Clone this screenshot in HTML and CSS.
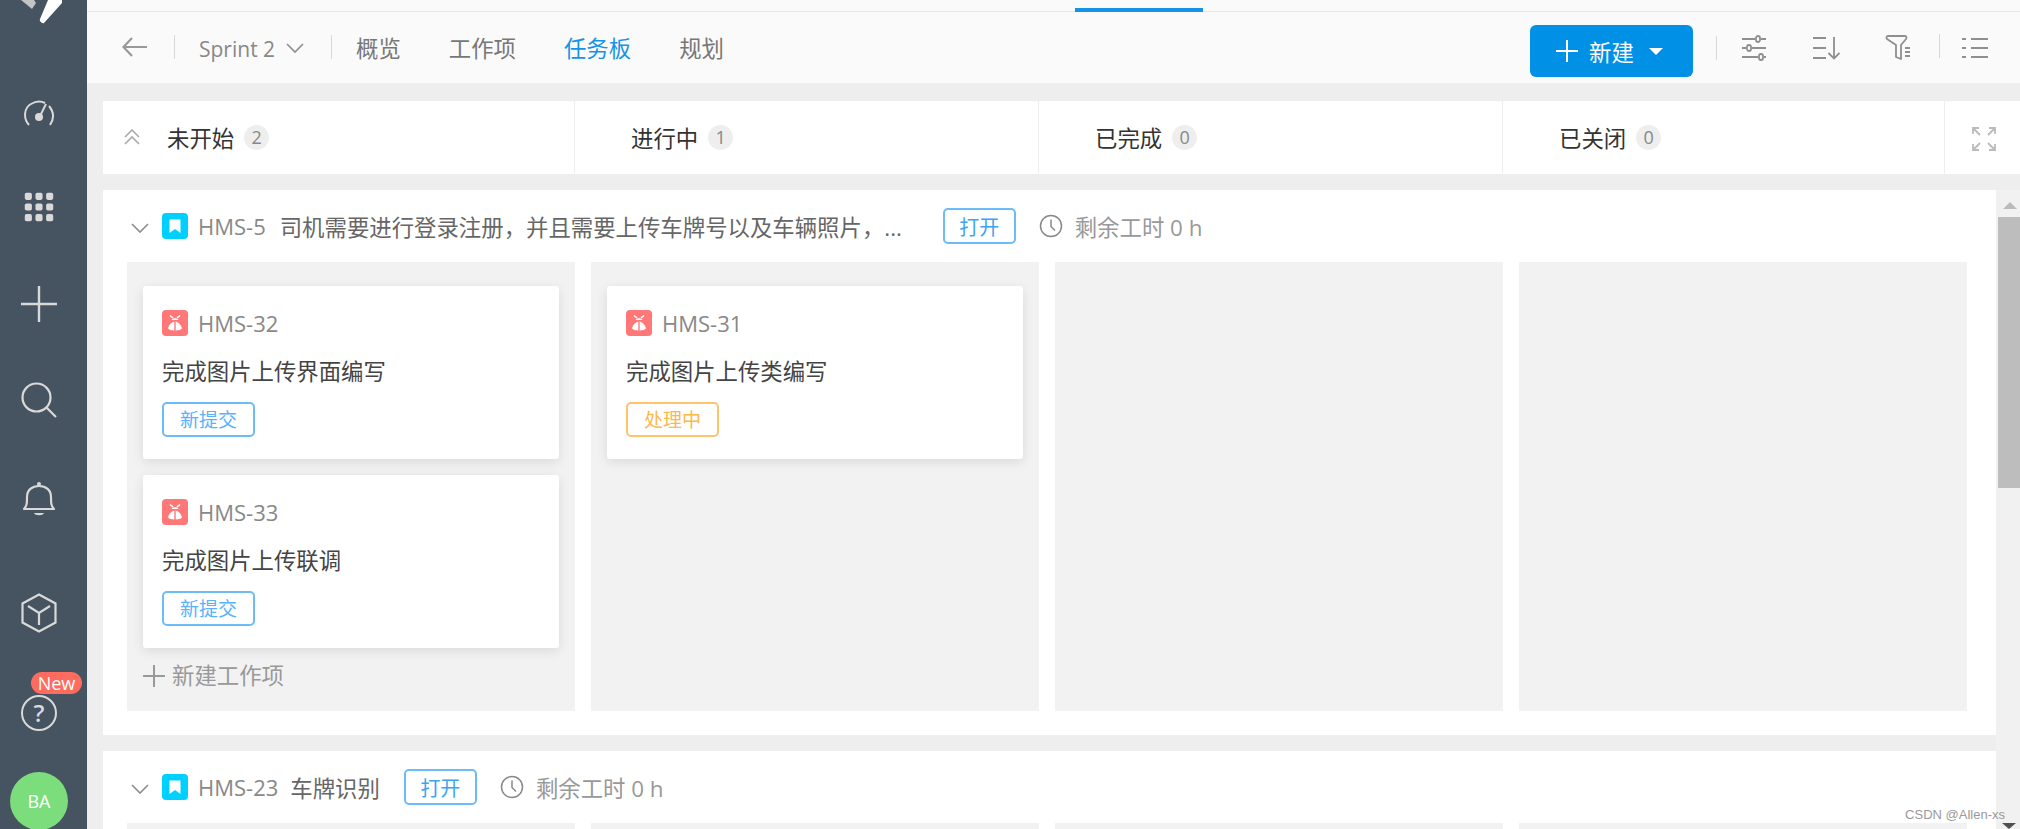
FILE: index.html
```html
<!DOCTYPE html>
<html lang="zh-CN">
<head>
  <meta charset="UTF-8">
  <title>任务板</title>
  <link rel="stylesheet" href="styles.css">
</head>
<body>
  <svg class="sprite" width="0" height="0">
    <symbol id="bug" viewBox="0 0 26 26">
      <rect width="26" height="26" rx="4" fill="#ff7777"/>
      <path d="M8 5.500l3 2.500M18 5.500l-3 2.500" stroke="#fff" stroke-width="1.600" fill="none"/>
      <path d="M9.500 10c1-2.500 6-2.500 7 0z" fill="#fff"/>
      <path d="M12.300 11.500L12.300 20.500C9.500 20.500 6.800 19.800 6 18.500 6.800 15 9 12.300 12.300 11.500zM13.700 11.500L13.700 20.500C16.500 20.500 19.200 19.800 20 18.500 19.200 15 17 12.300 13.700 11.500z" fill="#fff"/>
    </symbol>
    <symbol id="story" viewBox="0 0 26 26">
      <rect width="26" height="26" rx="4" fill="#00d0ff"/>
      <path d="M7.500 6.500h11v13.500l-5.500-4-5.500 4z" fill="#fff"/>
    </symbol>
    <symbol id="chev" viewBox="0 0 18 10">
      <path d="M1 1l8 8 8-8" fill="none" stroke="#8f8f8f" stroke-width="1.700"/>
    </symbol>
    <symbol id="clock" viewBox="0 0 24 24">
      <circle cx="12" cy="12" r="10.500" fill="none" stroke="#888" stroke-width="1.500"/>
      <path d="M12 5.500v7l4 4" fill="none" stroke="#888" stroke-width="1.500"/>
    </symbol>
  </svg>

  <aside class="sidebar">
    <svg class="logo" width="87" height="24" viewBox="0 0 87 24">
      <path d="M21 0h13l2 3-4 6z" fill="#c4c4c4"/>
      <path d="M48 0h14v3L44 23c-2 1-5-2-4-4z" fill="#fff"/>
    </svg>
    <svg class="nav-icon nav-dash" viewBox="0 0 36 36">
      <path d="M8 29C2 22 3 12 10 8c5-3 10-3 14-1M28 10c5 6 5 13 1 19" fill="none" stroke="#d9d9d9" stroke-width="2"/>
      <circle cx="18" cy="21" r="4" fill="#d9d9d9"/>
      <path d="M19 20l6-12" stroke="#d9d9d9" stroke-width="2"/>
    </svg>
    <svg class="nav-icon nav-grid" viewBox="0 0 36 36" fill="#d9d9d9">
      <rect x="2" y="2" width="8" height="8" rx="2"/><rect x="14" y="2" width="8" height="8" rx="2"/><rect x="26" y="2" width="8" height="8" rx="2"/>
      <rect x="2" y="14" width="8" height="8" rx="2"/><rect x="14" y="14" width="8" height="8" rx="2"/><rect x="26" y="14" width="8" height="8" rx="2"/>
      <rect x="2" y="26" width="8" height="8" rx="2"/><rect x="14" y="26" width="8" height="8" rx="2"/><rect x="26" y="26" width="8" height="8" rx="2"/>
    </svg>
    <svg class="nav-icon nav-plus" viewBox="0 0 36 36">
      <path d="M18 0v36M0 18h36" stroke="#d9d9d9" stroke-width="2.400" stroke-linecap="round"/>
    </svg>
    <svg class="nav-icon nav-search" viewBox="0 0 36 36">
      <circle cx="15.500" cy="15.500" r="14" fill="none" stroke="#d9d9d9" stroke-width="2.200"/>
      <path d="M25.500 25.500L35 35" stroke="#d9d9d9" stroke-width="2.200"/>
    </svg>
    <svg class="nav-icon nav-bell" viewBox="0 0 36 36">
      <path d="M3 28c3-3 3-6 3-12 0-7 5-11 12-11s12 4 12 11c0 6 0 9 3 12z" fill="none" stroke="#d9d9d9" stroke-width="2.200" stroke-linejoin="round"/>
      <circle cx="18" cy="3" r="2" fill="#d9d9d9"/>
      <path d="M13 32h10c-1 3-9 3-10 0z" fill="#d9d9d9"/>
    </svg>
    <svg class="nav-icon nav-box" viewBox="0 0 36 40">
      <path d="M18 1.500L34.500 10.500V29.500L18 38.500 1.500 29.500V10.500z" fill="none" stroke="#d9d9d9" stroke-width="2.200"/>
      <path d="M7 13l11 7 11-7M18 20v12" fill="none" stroke="#d9d9d9" stroke-width="2.200"/>
    </svg>
    <div class="help">
      <span class="new-badge">New</span>
      <span class="help-mark">?</span>
    </div>
    <div class="avatar">BA</div>
  </aside>

  <div class="main">
    <div class="topstrip"><span class="strip-active"></span></div>
    <header class="toolbar">
      <svg class="back" width="25" height="20" viewBox="0 0 25 20">
        <path d="M10 1L1.500 10l8.500 9M2 10h23" fill="none" stroke="#999" stroke-width="2.200"/>
      </svg>
      <span class="vsep vsep-back"></span>
      <span class="sprint">Sprint 2</span>
      <svg class="sprint-chev" width="18" height="10"><use href="#chev"/></svg>
      <span class="vsep vsep-sprint"></span>
      <nav class="tabs">
        <a>概览</a>
        <a>工作项</a>
        <a class="active">任务板</a>
        <a>规划</a>
      </nav>
      <button class="new-btn">
        <svg width="22" height="22" viewBox="0 0 22 22"><path d="M11 0v22M0 11h22" stroke="#fff" stroke-width="2"/></svg>
        <span>新建</span>
        <i class="caret"></i>
      </button>
      <span class="vsep vsep-new"></span>
      <svg class="tool tool-sliders" width="24" height="26" viewBox="0 0 24 26" fill="none" stroke="#8f8f8f" stroke-width="1.800">
        <path d="M0 4h13M19 4h5M0 13h4M10 13h14M0 22h16M22 22h2"/>
        <rect x="14" y="1" width="4" height="6" rx="2"/><rect x="5" y="10" width="4" height="6" rx="2"/><rect x="17" y="19" width="4" height="6" rx="2"/>
      </svg>
      <svg class="tool tool-sort" width="27" height="24" viewBox="0 0 27 24" fill="none" stroke="#8f8f8f" stroke-width="1.800">
        <path d="M0 2h13M0 12h13M0 22h13M21 1v21M15.500 17l5.500 5.500 5.500-5.500"/>
      </svg>
      <svg class="tool tool-filter" width="26" height="26" viewBox="0 0 26 26" fill="none" stroke="#8f8f8f" stroke-width="1.800">
        <path d="M3 1h17c1.500 0 2 1.500 1 3l-5 6v14l-5-2v-12L2 4C1 2.500 1.500 1 3 1z" stroke-linejoin="round"/>
        <path d="M20 13h5M20 17h5M20 21h5"/>
      </svg>
      <span class="vsep vsep-filter"></span>
      <svg class="tool tool-list" width="26" height="22" viewBox="0 0 26 22" fill="none" stroke="#8f8f8f" stroke-width="1.800">
        <path d="M0 2h4M9 2h17M0 11h4M9 11h17M0 20h4M9 20h17"/>
      </svg>
    </header>

    <div class="status-row">
      <div class="status status-first">
        <svg class="collapse" width="16" height="16" viewBox="0 0 16 16" fill="none" stroke="#aaa" stroke-width="1.600">
          <path d="M1 8l7-7 7 7M1 15l7-7 7 7"/>
        </svg>
        <span class="status-name">未开始</span><span class="count">2</span>
      </div>
      <div class="status"><span class="status-name">进行中</span><span class="count">1</span></div>
      <div class="status"><span class="status-name">已完成</span><span class="count">0</span></div>
      <div class="status status-closed"><span class="status-name">已关闭</span><span class="count">0</span></div>
      <div class="status-expand">
        <svg width="24" height="24" viewBox="0 0 24 24" fill="none" stroke="#bbb" stroke-width="1.800">
          <path d="M1 7V1h6M1 1l7 7M17 1h6v6M23 1l-7 7M1 17v6h6M1 23l7-7M23 17v6h-6M23 23l-7-7"/>
        </svg>
      </div>
    </div>

    <div class="board">
      <div class="lanes">
        <section class="lane">
          <div class="lane-head">
            <svg class="lane-chev" width="18" height="10"><use href="#chev"/></svg>
            <svg class="type-icon" width="26" height="26"><use href="#story"/></svg>
            <span class="item-id">HMS-5</span>
            <span class="lane-title lane-title-long">司机需要进行登录注册，并且需要上传车牌号以及车辆照片，...</span>
            <span class="tag tag-open">打开</span>
            <svg class="clock" width="24" height="24"><use href="#clock"/></svg>
            <span class="remain">剩余工时 0 h</span>
          </div>
          <div class="columns">
            <div class="column">
              <div class="card">
                <div class="card-head">
                  <svg class="type-icon" width="26" height="26"><use href="#bug"/></svg>
                  <span class="item-id">HMS-32</span>
                </div>
                <div class="card-title">完成图片上传界面编写</div>
                <span class="tag tag-new">新提交</span>
              </div>
              <div class="card">
                <div class="card-head">
                  <svg class="type-icon" width="26" height="26"><use href="#bug"/></svg>
                  <span class="item-id">HMS-33</span>
                </div>
                <div class="card-title">完成图片上传联调</div>
                <span class="tag tag-new">新提交</span>
              </div>
              <div class="add-item">
                <svg width="22" height="22" viewBox="0 0 22 22"><path d="M11 0v22M0 11h22" stroke="#999" stroke-width="2"/></svg>
                <span>新建工作项</span>
              </div>
            </div>
            <div class="column">
              <div class="card">
                <div class="card-head">
                  <svg class="type-icon" width="26" height="26"><use href="#bug"/></svg>
                  <span class="item-id">HMS-31</span>
                </div>
                <div class="card-title">完成图片上传类编写</div>
                <span class="tag tag-doing">处理中</span>
              </div>
            </div>
            <div class="column"></div>
            <div class="column"></div>
          </div>
        </section>

        <section class="lane">
          <div class="lane-head">
            <svg class="lane-chev" width="18" height="10"><use href="#chev"/></svg>
            <svg class="type-icon" width="26" height="26"><use href="#story"/></svg>
            <span class="item-id">HMS-23</span>
            <span class="lane-title">车牌识别</span>
            <span class="tag tag-open">打开</span>
            <svg class="clock" width="24" height="24"><use href="#clock"/></svg>
            <span class="remain">剩余工时 0 h</span>
          </div>
          <div class="columns">
            <div class="column"></div>
            <div class="column"></div>
            <div class="column"></div>
            <div class="column"></div>
          </div>
        </section>
      </div>

      <div class="scrollbar">
        <i class="arrow-up"></i>
        <div class="thumb"></div>
      </div>
    </div>
  </div>

  <i class="arrow-down"></i>
  <div class="watermark">CSDN @Allen-xs</div>
</body>
</html>
```

FILE: styles.css
```css
* { box-sizing: border-box; }
html, body { height: 829px; }
body {
  margin: 0; display: flex; overflow: hidden; background: #eee; color: #333;
  font-family: "Open Sans", "Noto Sans CJK SC", sans-serif; font-size: 22px;
}
.sprite { position: absolute; }

/* left nav */
.sidebar {
  width: 87px; height: 829px; flex: none; background: #465360; overflow: hidden; padding-right: 9px;
  display: flex; flex-direction: column; align-items: center;
}
.logo { flex: none; align-self: flex-start; }
.nav-icon { flex: none; width: 36px; height: 36px; }
.nav-dash { margin-top: 72px; }
.nav-grid { margin-top: 59px; width: 32px; height: 32px; }
.nav-plus { margin-top: 63px; }
.nav-search { margin-top: 60px; }
.nav-bell { margin-top: 63px; }
.nav-box { margin-top: 76px; height: 40px; }
.help { position: relative; margin-top: 62px; width: 36px; height: 36px; flex: none; }
.help-mark {
  display: block; width: 36px; height: 36px; border: 2.200px solid #d9d9d9; border-radius: 50%;
  color: #d9d9d9; font-size: 24px; font-weight: 600; line-height: 31px; text-align: center;
}
.new-badge {
  position: absolute; left: 10px; top: -23px; width: 51px; height: 22px; border-radius: 11px;
  background: #ff6b5e; color: #fff; font-size: 18px; line-height: 22px; text-align: center;
}
.avatar {
  margin-top: 41px; width: 58px; height: 58px; flex: none; border-radius: 50%;
  background: #7cdd7c; color: #fff; font-size: 18px; line-height: 58px; text-align: center;
}

.main { flex: 1; min-width: 0; height: 829px; display: flex; flex-direction: column; }

/* top */
.topstrip { height: 12px; flex: none; background: #fafafa; border-bottom: 1px solid #e6e6e6; padding-left: 988px; }
.strip-active { display: block; width: 128px; height: 4px; margin-top: 8px; background: #1593e6; }
.toolbar { height: 71px; flex: none; background: #fafafa; display: flex; align-items: center; padding-left: 35px; }
.back { margin-top: -2px; flex: none; }
.vsep { width: 1px; height: 24px; background: #d8d8d8; flex: none; }
.vsep-back { margin-left: 27px; margin-right: 24px; margin-top: -2px; }
.sprint { color: #888; font-size: 21px; width: 78px; margin-top: 3px; }
.sprint-chev { margin-left: 9px; flex: none; }
.vsep-sprint { margin-left: 27px; margin-right: 24px; margin-top: -2px; }
.tabs { display: flex; gap: 48px; flex: none; margin-top: 3px; }
.tabs a { color: #777; font-size: 22.400px; line-height: 32px; }
.tabs a.active { color: #1593e6; }
.new-btn {
  margin-left: auto; height: 52px; width: 163px; flex: none; border: 0; border-radius: 6px; background: #0091e6;
  color: #fff; font: inherit; font-size: 22.400px; display: flex; align-items: center; padding: 0 0 0 26px;
  margin-top: 7px;
}
.new-btn span { margin-left: 11px; }
.caret {
  margin-left: 15px; width: 0; height: 0;
  border-left: 7px solid transparent; border-right: 7px solid transparent; border-top: 7px solid #fff;
}
.vsep-new { margin-left: 23px; }
.tool { flex: none; }
.tool-sliders { margin-left: 25px; }
.tool-sort { margin-left: 47px; }
.tool-filter { margin-left: 45px; }
.vsep-filter { margin-left: 28px; margin-top: -4px; }
.tool-list { margin-left: 22px; margin-right: 32px; }

/* status header */
.status-row { margin: 18px 0 16px 16px; height: 73px; flex: none; background: #fff; display: flex; }
.status {
  width: 464px; flex: none; display: flex; align-items: center; padding-left: 56px;
  border-right: 1.500px solid #eee;
}
.status-first { width: 472px; padding-left: 21px; }
.status-closed { width: 442px; }
.collapse { margin-right: 27px; flex: none; margin-top: -2px; }
.status-name { font-size: 22.400px; color: #333; }
.count {
  margin-left: 10px; width: 25px; height: 25px; border-radius: 50%; background: #eee;
  color: #888; font-size: 18px; line-height: 25px; text-align: center;
}
.status-expand { flex: 1; padding: 2px 0 0 27px; display: flex; align-items: center; }

/* swimlanes */
.board { flex: 1; min-height: 0; display: flex; margin-left: 16px; }
.lanes { flex: 1; min-width: 0; display: flex; flex-direction: column; gap: 16px; overflow: hidden; }
.lane { background: #fff; padding: 0 29px 24px 24px; flex: none; }
.lane-head { height: 72px; display: flex; align-items: center; }
.lane-chev { margin-left: 4px; margin-right: 13px; flex: none; margin-top: 4px; }
.type-icon { flex: none; }
.item-id { color: #888; font-size: 22px; margin-left: 10px; }
.lane-title { color: #666; font-size: 22.400px; margin-left: 12px; }
.lane-title-long { width: 622px; margin-left: 14px; white-space: nowrap; overflow: hidden; }
.lane-title + .tag { margin-left: 24px; }
.lane-title-long + .tag { margin-left: 41px; }
.clock { margin-left: 23px; flex: none; }
.remain { margin-left: 12px; color: #999; font-size: 22.400px; }
.columns { display: flex; gap: 16px; }
.column { width: 448px; height: 449px; flex: none; background: #f2f2f2; padding: 24px 16px 0; }

.tag {
  display: inline-block; height: 35px; border: 2px solid; border-radius: 5px;
  font-size: 19px; line-height: 33px; text-align: center;
}
.tag-open { width: 73px; height: 36px; color: #3aa4f5; border-color: #6bbcf9; font-size: 20px; line-height: 35px; }
.tag-new { width: 93px; color: #58b3fa; border-color: #6bbcf9; }
.tag-doing { width: 93px; color: #fdb84a; border-color: #fdc46b; }

/* cards */
.card {
  height: 173px; margin-bottom: 16px; padding: 24px 19px 0; background: #fff; border-radius: 3px;
  box-shadow: 0 3px 12px rgba(0, 0, 0, .1);
}
.card-head { display: flex; align-items: center; height: 26px; }
.card-title { margin: 20px 0 14px; font-size: 22.400px; line-height: 32px; color: #444; }
.add-item { display: flex; align-items: center; gap: 7px; margin-top: -2px; color: #999; font-size: 22.400px; line-height: 28px; }

/* fake scrollbar */
.scrollbar { width: 24px; flex: none; background: #f1f1f1; }
.arrow-up {
  display: block; width: 0; height: 0; margin: 12px auto 8px; transform: translateX(2px);
  border-left: 7px solid transparent; border-right: 7px solid transparent; border-bottom: 7px solid #bbb;
}
.thumb { margin: 0 0 0 2px; height: 271px; background: #bdbdbd; }
.arrow-down {
  position: absolute; right: 4px; bottom: 0; width: 0; height: 0;
  border-left: 7px solid transparent; border-right: 7px solid transparent; border-top: 6px solid #505050;
}
.watermark {
  position: absolute; right: 15px; bottom: 6px; color: #999;
  font-family: "Liberation Sans", sans-serif; font-size: 13px; line-height: 16px;
}
```
